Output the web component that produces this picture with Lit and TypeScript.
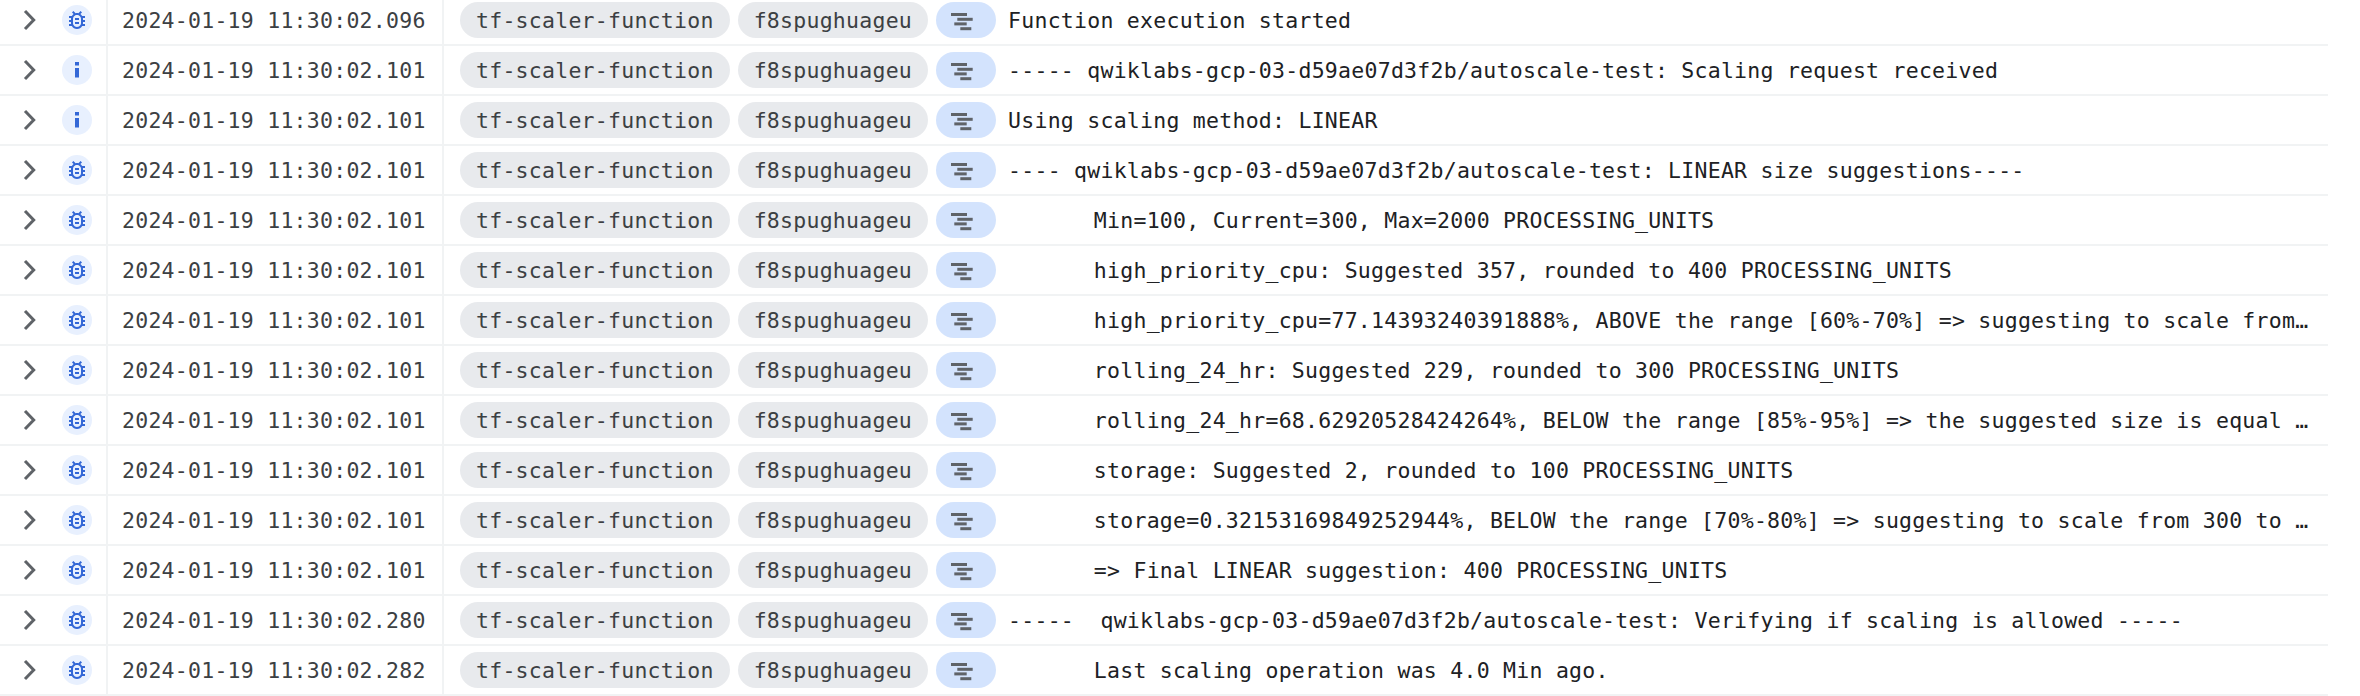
import { LitElement, html, css, svg } from "lit";
import { customElement } from "lit/decorators.js";

type Row = { t: string; k: "bug" | "info"; m: string; indent?: boolean };

const rows: Row[] = [
  { t: "2024-01-19 11:30:02.096", k: "bug", m: "Function execution started" },
  { t: "2024-01-19 11:30:02.101", k: "info", m: "----- qwiklabs-gcp-03-d59ae07d3f2b/autoscale-test: Scaling request received" },
  { t: "2024-01-19 11:30:02.101", k: "info", m: "Using scaling method: LINEAR" },
  { t: "2024-01-19 11:30:02.101", k: "bug", m: "---- qwiklabs-gcp-03-d59ae07d3f2b/autoscale-test: LINEAR size suggestions----" },
  { t: "2024-01-19 11:30:02.101", k: "bug", indent: true, m: "Min=100, Current=300, Max=2000 PROCESSING_UNITS" },
  { t: "2024-01-19 11:30:02.101", k: "bug", indent: true, m: "high_priority_cpu: Suggested 357, rounded to 400 PROCESSING_UNITS" },
  { t: "2024-01-19 11:30:02.101", k: "bug", indent: true, m: "high_priority_cpu=77.14393240391888%, ABOVE the range [60%-70%] => suggesting to scale from 300 to 400 PROCESSING_UNITS." },
  { t: "2024-01-19 11:30:02.101", k: "bug", indent: true, m: "rolling_24_hr: Suggested 229, rounded to 300 PROCESSING_UNITS" },
  { t: "2024-01-19 11:30:02.101", k: "bug", indent: true, m: "rolling_24_hr=68.62920528424264%, BELOW the range [85%-95%] => the suggested size is equal to the current size: 300 PROCESSING_UNITS" },
  { t: "2024-01-19 11:30:02.101", k: "bug", indent: true, m: "storage: Suggested 2, rounded to 100 PROCESSING_UNITS" },
  { t: "2024-01-19 11:30:02.101", k: "bug", indent: true, m: "storage=0.32153169849252944%, BELOW the range [70%-80%] => suggesting to scale from 300 to 100 PROCESSING_UNITS." },
  { t: "2024-01-19 11:30:02.101", k: "bug", indent: true, m: "=> Final LINEAR suggestion: 400 PROCESSING_UNITS" },
  { t: "2024-01-19 11:30:02.280", k: "bug", m: "-----  qwiklabs-gcp-03-d59ae07d3f2b/autoscale-test: Verifying if scaling is allowed -----" },
  { t: "2024-01-19 11:30:02.282", k: "bug", indent: true, m: "Last scaling operation was 4.0 Min ago." },
];

const BUG =
  "M20 8h-2.81c-.45-.78-1.07-1.45-1.82-1.96L17 4.41 15.59 3l-2.17 2.17C12.96 5.06 12.49 5 12 5s-.96.06-1.41.17L8.41 3 7 4.41l1.62 1.63C7.88 6.55 7.26 7.22 6.81 8H4v2h2.09c-.05.33-.09.66-.09 1v1H4v2h2v1c0 .34.04.67.09 1H4v2h2.81c1.04 1.79 2.97 3 5.19 3s4.15-1.21 5.19-3H20v-2h-2.09c.05-.33.09-.66.09-1v-1h2v-2h-2v-1c0-.34-.04-.67-.09-1H20V8zm-4 4v3c0 .22-.03.47-.07.7l-.1.65-.37.65c-.72 1.24-2.04 2-3.46 2s-2.74-.77-3.46-2l-.37-.64-.1-.65C8.03 15.47 8 15.22 8 15v-4c0-.22.03-.47.07-.7l.1-.65.37-.65c.3-.52.72-.97 1.21-1.31l.57-.39.74-.18c.31-.08.63-.12.94-.12.32 0 .63.04.95.12l.68.16.61.42c.5.34.91.78 1.21 1.31l.38.65.1.65c.04.22.07.47.07.69v1zm-6 2h4v2h-4zm0-4h4v2h-4z";

const chevron = html`<svg class="chev" viewBox="0 0 16 40" width="16" height="40"><path fill="none" stroke="#5f6368" stroke-width="3" d="M2 11l8.7 9-8.7 9"/></svg>`;
const bugIcon = html`<svg viewBox="0 0 24 24" width="24" height="24"><path fill="#3367d6" d="${BUG}"/></svg>`;
const infoIcon = html`<svg viewBox="0 0 30 30" width="30" height="30"><rect x="13" y="7" width="4" height="3.5" fill="#3367d6"/><rect x="13" y="13" width="4" height="9.5" fill="#3367d6"/></svg>`;
const stack = html`<svg viewBox="0 0 60 36" width="60" height="36">
  ${[[15, 11, 16], [21.3, 15.8, 15.4], [18.3, 20.4, 12.4], [24.3, 25.2, 11]].map(
    ([x, y, w]) => svg`<rect x="${x}" y="${y}" width="${w}" height="3" fill="#5f6368"/>`
  )}
</svg>`;

@customElement("app-root")
export class AppRoot extends LitElement {
  static styles = css`
    :host {
      display: block;
      height: 696px;
      overflow: hidden;
      background: #fff;
      font-family: "DejaVu Sans Mono", "Liberation Mono", monospace;
      font-size: 21.5px;
      letter-spacing: 0.257px;
      color: #202124;
    }
    .list {
      margin-top: -4px;
      width: 2328px;
    }
    .row {
      display: grid;
      grid-template-columns: 106px 2px 334px 2px 1fr;
      height: 50px;
      box-sizing: border-box;
      border-bottom: 2px solid #f1f3f4;
      align-items: stretch;
    }
    .sep {
      background: #f1f3f4;
    }
    .lead {
      display: flex;
      align-items: center;
    }
    .chev {
      margin-left: 23px;
      flex: none;
    }
    .sev {
      width: 30px;
      height: 30px;
      margin-left: 23px;
      border-radius: 50%;
      background: #e8f0fe;
      display: flex;
      align-items: center;
      justify-content: center;
      flex: none;
    }
    .time {
      display: flex;
      align-items: center;
      padding-left: 14px;
      color: #3c4043;
      white-space: pre;
    }
    .main {
      display: flex;
      align-items: center;
      padding-left: 16px;
      min-width: 0;
    }
    .chip {
      height: 36px;
      box-sizing: border-box;
      border-radius: 18px;
      padding: 0 16px;
      background: #e8eaed;
      color: #3c4043;
      display: flex;
      align-items: center;
      margin-right: 8px;
      flex: none;
      white-space: pre;
    }
    .stack {
      width: 60px;
      height: 36px;
      border-radius: 18px;
      background: #d3e3fd;
      flex: none;
      margin-right: 12px;
    }
    .stack svg {
      display: block;
    }
    .msg {
      flex: 1;
      min-width: 0;
      padding-right: 16px;
      white-space: pre;
      overflow: hidden;
      text-overflow: ellipsis;
    }
    .indent {
      padding-left: 85.8px;
    }
  `;

  render() {
    return html`<div class="list">
      ${rows.map(
        (r) => html`<div class="row">
          <div class="lead">${chevron}<span class="sev">${r.k === "bug" ? bugIcon : infoIcon}</span></div>
          <div class="sep"></div>
          <div class="time">${r.t}</div>
          <div class="sep"></div>
          <div class="main">
            <span class="chip">tf-scaler-function</span>
            <span class="chip">f8spughuageu</span>
            <span class="stack">${stack}</span>
            <div class="msg ${r.indent ? "indent" : ""}">${r.m}</div>
          </div>
        </div>`
      )}
    </div>`;
  }
}
